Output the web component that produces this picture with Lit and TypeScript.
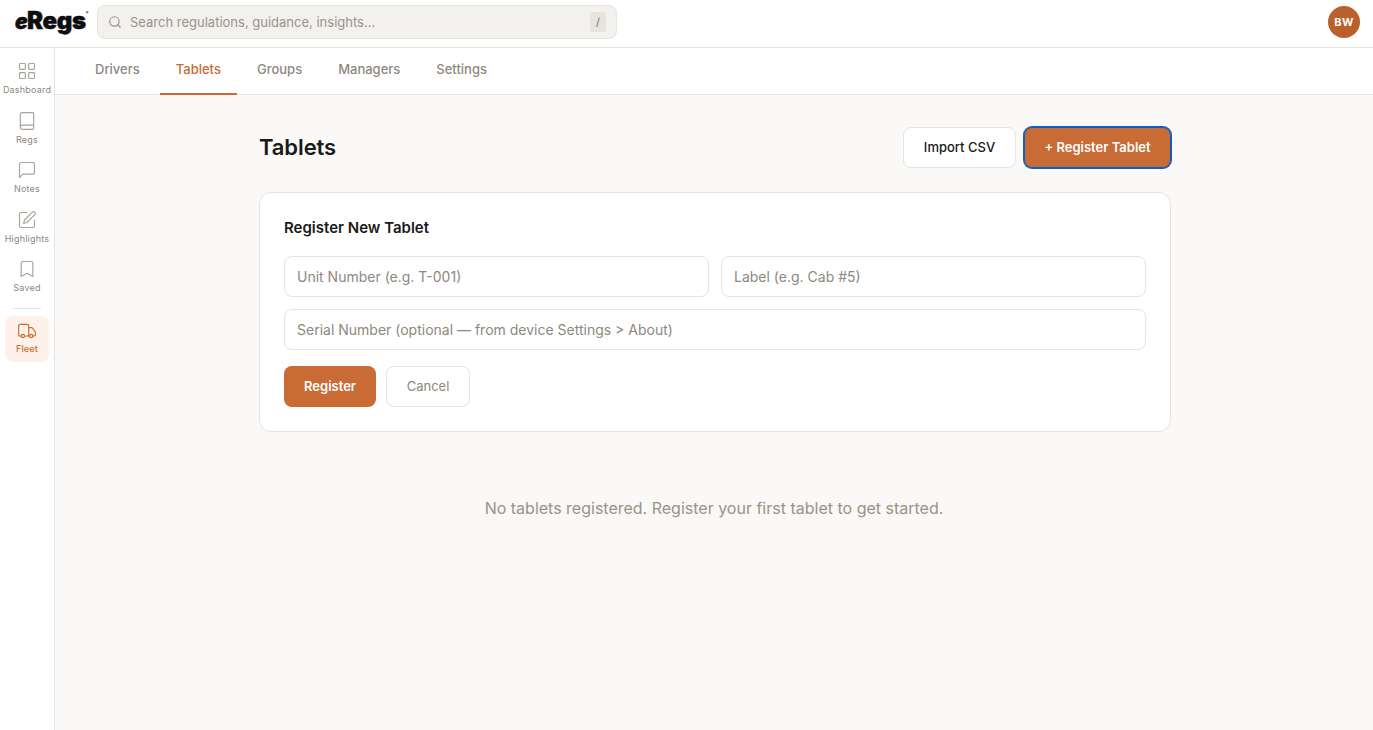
import { LitElement, html, css, svg } from "lit";
import { customElement } from "lit/decorators.js";

const icons: Record<string, unknown> = {
  Dashboard: svg`<rect x="3" y="3" width="7" height="7" rx="1"/><rect x="14" y="3" width="7" height="7" rx="1"/><rect x="3" y="14" width="7" height="7" rx="1"/><rect x="14" y="14" width="7" height="7" rx="1"/>`,
  Regs: svg`<path d="M4 19.5v-15A2.5 2.5 0 0 1 6.5 2H19a1 1 0 0 1 1 1v18a1 1 0 0 1-1 1H6.5a2.5 2.5 0 0 1 0-5H20"/>`,
  Notes: svg`<path d="M21 15a2 2 0 0 1-2 2H7l-4 4V5a2 2 0 0 1 2-2h14a2 2 0 0 1 2 2z"/>`,
  Highlights: svg`<path d="M12 3H5a2 2 0 0 0-2 2v14a2 2 0 0 0 2 2h14a2 2 0 0 0 2-2v-7"/><path d="M18.4 2.6a2.1 2.1 0 0 1 3 3L12 15l-4 1 1-4z"/>`,
  Saved: svg`<path d="m19 21-7-4-7 4V5a2 2 0 0 1 2-2h10a2 2 0 0 1 2 2z"/>`,
  Fleet: svg`<path d="M14 18V6a2 2 0 0 0-2-2H4a2 2 0 0 0-2 2v11a1 1 0 0 0 1 1h2"/><path d="M15 18H9"/><path d="M19 18h2a1 1 0 0 0 1-1v-3.65a1 1 0 0 0-.22-.62l-3.48-4.35A1 1 0 0 0 17.52 8H14"/><circle cx="17" cy="18" r="2"/><circle cx="7" cy="18" r="2"/>`,
};

@customElement("app-root")
export class AppRoot extends LitElement {
  static styles = css`
    :host { display: block; height: 730px; overflow: hidden; background: #faf9f7; font-family: Inter, "Liberation Sans", sans-serif; color: #1a1a1a; }
    * { box-sizing: border-box; }
    .top { height: 48px; background: #fff; border-bottom: 1px solid #e7e3de; display: flex; align-items: center; padding: 0 13px 3px 15px; }
    .logo { width: 82px; margin-bottom: 2px; font-size: 24px; line-height: 30px; font-weight: 900; letter-spacing: -.35px; color: #0d0d0d; white-space: nowrap; -webkit-text-stroke: .5px #0d0d0d; }
    .logo i { font-size: 21px; letter-spacing: -.6px; }
    .logo sup { font-size: 4px; letter-spacing: 0; vertical-align: 15px; line-height: 0; margin-left: 0; -webkit-text-stroke: 0; }
    .search { width: 520px; height: 34px; background: #f3f1ee; border: 1px solid #e7e3de; border-radius: 8px; display: flex; align-items: center; padding: 0 10px; gap: 8px; color: #98938c; font-size: 13px; }
    .search svg { width: 14px; height: 14px; fill: none; stroke: #98938c; stroke-width: 2; stroke-linecap: round; flex: none; }
    .search span.ph { flex: 1; padding-bottom: 1px; }
    .kbd { width: 16px; height: 20px; border-radius: 3px; background: #e7e3de; font-size: 11px; display: flex; align-items: center; justify-content: center; color: #78736c; }
    .avatar { margin-left: auto; width: 32px; height: 32px; border-radius: 50%; background: #b9602c; color: #fff; font-size: 11px; font-weight: 700; display: flex; align-items: center; justify-content: center; letter-spacing: .3px; }
    .body { display: flex; height: 682px; }
    .side { width: 55px; flex: none; background: #fff; border-right: 1px solid #e7e3de; display: flex; flex-direction: column; align-items: center; padding-top: 13px; }
    .item { width: 44px; display: flex; flex-direction: column; align-items: center; color: #8d8880; font-size: 9px; line-height: 11px; font-weight: 400; letter-spacing: .2px; white-space: nowrap; }
    .item svg { width: 20px; height: 20px; fill: none; stroke: #a9a49d; stroke-width: 1.4; stroke-linecap: round; stroke-linejoin: round; margin-bottom: 3px; flex: none; }
    .item.reg { height: 49.5px; }
    .sep { width: 28px; height: 1px; background: #e7e3de; margin: -1px 0 7px; }
    .item.active { height: 46px; background: #fdf1ea; border-radius: 8px; color: #c96b35; padding-top: 5px; font-weight: 500; }
    .item.active svg { stroke: #c96b35; margin-bottom: 2px; }
    .main { flex: 1; min-width: 0; display: flex; flex-direction: column; }
    .tabs { height: 47px; background: #fff; border-bottom: 1px solid #e7e3de; display: flex; gap: 4px; padding-left: 24px; flex: none; }
    .tab { padding: 0 16px; height: 47px; line-height: 43px; font-size: 13px; font-weight: 500; color: #8d8880; border-bottom: 2px solid transparent; }
    .tab.active { color: #c96b35; border-bottom-color: #c96b35; }
    .content { width: 912px; margin-left: 204px; padding-top: 32px; }
    .head { display: flex; align-items: center; height: 40px; gap: 8px; }
    h1 { margin: 0 auto 0 0; font-size: 22px; line-height: 40px; font-weight: 600; color: #1a1a1a; letter-spacing: -.1px; }
    .btn { height: 41px; border-radius: 8px; font: inherit; font-size: 13px; font-weight: 500; display: flex; align-items: center; justify-content: center; }
    .import { width: 113px; background: #fff; border: 1px solid #e7e3de; color: #1a1a1a; }
    .primary { background: #c96b35; color: #fff; font-weight: 600; border: 0; }
    .reg-tab { width: 147px; box-shadow: 0 0 0 1px #0b5fc6, inset 0 0 0 1px #0b5fc6; }
    .card { margin-top: 25px; height: 240px; background: #fff; border: 1px solid #e7e3de; border-radius: 12px; padding: 24px; }
    h2 { margin: 0 0 17px; font-size: 15px; line-height: 22px; font-weight: 600; color: #1a1a1a; }
    .row { display: flex; gap: 12px; margin-bottom: 12px; }
    .input { flex: 1; height: 41px; border: 1px solid #e7e3de; border-radius: 8px; background: #fff; padding: 0 12px; display: flex; align-items: center; font-size: 14px; color: #8d8880; }
    .actions { display: flex; gap: 10px; margin-top: 16px; }
    .actions .btn { padding-bottom: 1px; }
    .submit { width: 92px; }
    .cancel { width: 84px; background: #fff; border: 1px solid #e7e3de; color: #8d8880; font-weight: 400; }
    .empty { margin-top: 64px; padding-right: 2px; text-align: center; font-size: 16px; line-height: 24px; color: #98938c; }
  `;

  render() {
    const nav = ["Dashboard", "Regs", "Notes", "Highlights", "Saved"];
    return html`
      <div class="top">
        <div class="logo"><i>e</i>Regs<sup>®</sup></div>
        <div class="search">
          <svg viewBox="0 0 24 24"><circle cx="11" cy="11" r="8"/><path d="m21 21-4.3-4.3"/></svg>
          <span class="ph">Search regulations, guidance, insights...</span>
          <span class="kbd">/</span>
        </div>
        <div class="avatar">BW</div>
      </div>
      <div class="body">
        <nav class="side">
          ${nav.map((n) => html`<div class="item reg"><svg viewBox="0 0 24 24">${icons[n]}</svg>${n}</div>`)}
          <div class="sep"></div>
          <div class="item active"><svg viewBox="0 0 24 24">${icons.Fleet}</svg>Fleet</div>
        </nav>
        <div class="main">
          <div class="tabs">
            ${["Drivers", "Tablets", "Groups", "Managers", "Settings"].map((t) => html`<div class="tab ${t === "Tablets" ? "active" : ""}">${t}</div>`)}
          </div>
          <div class="content">
            <div class="head">
              <h1>Tablets</h1>
              <div class="btn import">Import CSV</div>
              <div class="btn primary reg-tab">+ Register Tablet</div>
            </div>
            <div class="card">
              <h2>Register New Tablet</h2>
              <div class="row">
                <div class="input">Unit Number (e.g. T-001)</div>
                <div class="input">Label (e.g. Cab #5)</div>
              </div>
              <div class="row">
                <div class="input">Serial Number (optional — from device Settings &gt; About)</div>
              </div>
              <div class="actions">
                <div class="btn primary submit">Register</div>
                <div class="btn cancel">Cancel</div>
              </div>
            </div>
            <div class="empty">No tablets registered. Register your first tablet to get started.</div>
          </div>
        </div>
      </div>
    `;
  }
}
